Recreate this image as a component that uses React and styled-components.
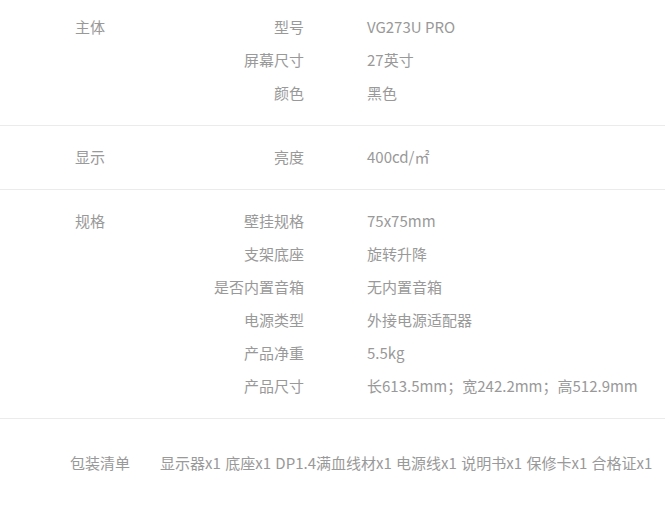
import React from "react";
import styled, { createGlobalStyle } from "styled-components";

const GlobalStyle = createGlobalStyle`
  html, body { margin: 0; padding: 0; background: #fff; }
  body {
    font-family: "Noto Sans CJK SC", "Noto Sans", sans-serif;
    font-size: 15px;
    color: #999;
  }
`;

const Page = styled.div`
  width: 665px;
  display: flex;
  flex-direction: column;
`;

const Section = styled.section`
  display: grid;
  grid-template-columns: 170px 1fr;
  padding: ${(p) => (p.$first ? "10px 0 16px" : "14px 0 16px")};
  border-bottom: 1px solid #ebebeb;
`;

const GroupName = styled.div`
  padding-left: 75px;
  line-height: 33px;
`;

const ItemList = styled.div`
  display: grid;
  grid-template-columns: 134px 1fr;
  grid-auto-rows: 33px;
  align-items: center;
`;

const ItemLabel = styled.div`
  text-align: right;
  line-height: 33px;
  white-space: nowrap;
`;

const ItemValue = styled.div`
  padding-left: 63px;
  line-height: 33px;
  white-space: nowrap;
`;

const PackRow = styled.div`
  display: flex;
  gap: 30px;
  padding: 30px 0 40px 70px;
  line-height: 28px;
  white-space: nowrap;
`;

const PackList = styled.span`
  word-spacing: 1px;
`;

const groups = [
  {
    name: "主体",
    items: [
      ["型号", "VG273U PRO"],
      ["屏幕尺寸", "27英寸"],
      ["颜色", "黑色"],
    ],
  },
  {
    name: "显示",
    items: [["亮度", "400cd/㎡"]],
  },
  {
    name: "规格",
    items: [
      ["壁挂规格", "75x75mm"],
      ["支架底座", "旋转升降"],
      ["是否内置音箱", "无内置音箱"],
      ["电源类型", "外接电源适配器"],
      ["产品净重", "5.5kg"],
      ["产品尺寸", "长613.5mm；宽242.2mm；高512.9mm"],
    ],
  },
];

export default function App() {
  return (
    <>
      <GlobalStyle />
      <Page>
        {groups.map((g, i) => (
          <Section key={g.name} $first={i === 0}>
            <GroupName>{g.name}</GroupName>
            <ItemList>
              {g.items.map(([k, v]) => (
                <React.Fragment key={k}>
                  <ItemLabel>{k}</ItemLabel>
                  <ItemValue>{v}</ItemValue>
                </React.Fragment>
              ))}
            </ItemList>
          </Section>
        ))}
        <PackRow>
          <span>包装清单</span>
          <PackList>显示器x1 底座x1 DP1.4满血线材x1 电源线x1 说明书x1 保修卡x1 合格证x1</PackList>
        </PackRow>
      </Page>
    </>
  );
}
